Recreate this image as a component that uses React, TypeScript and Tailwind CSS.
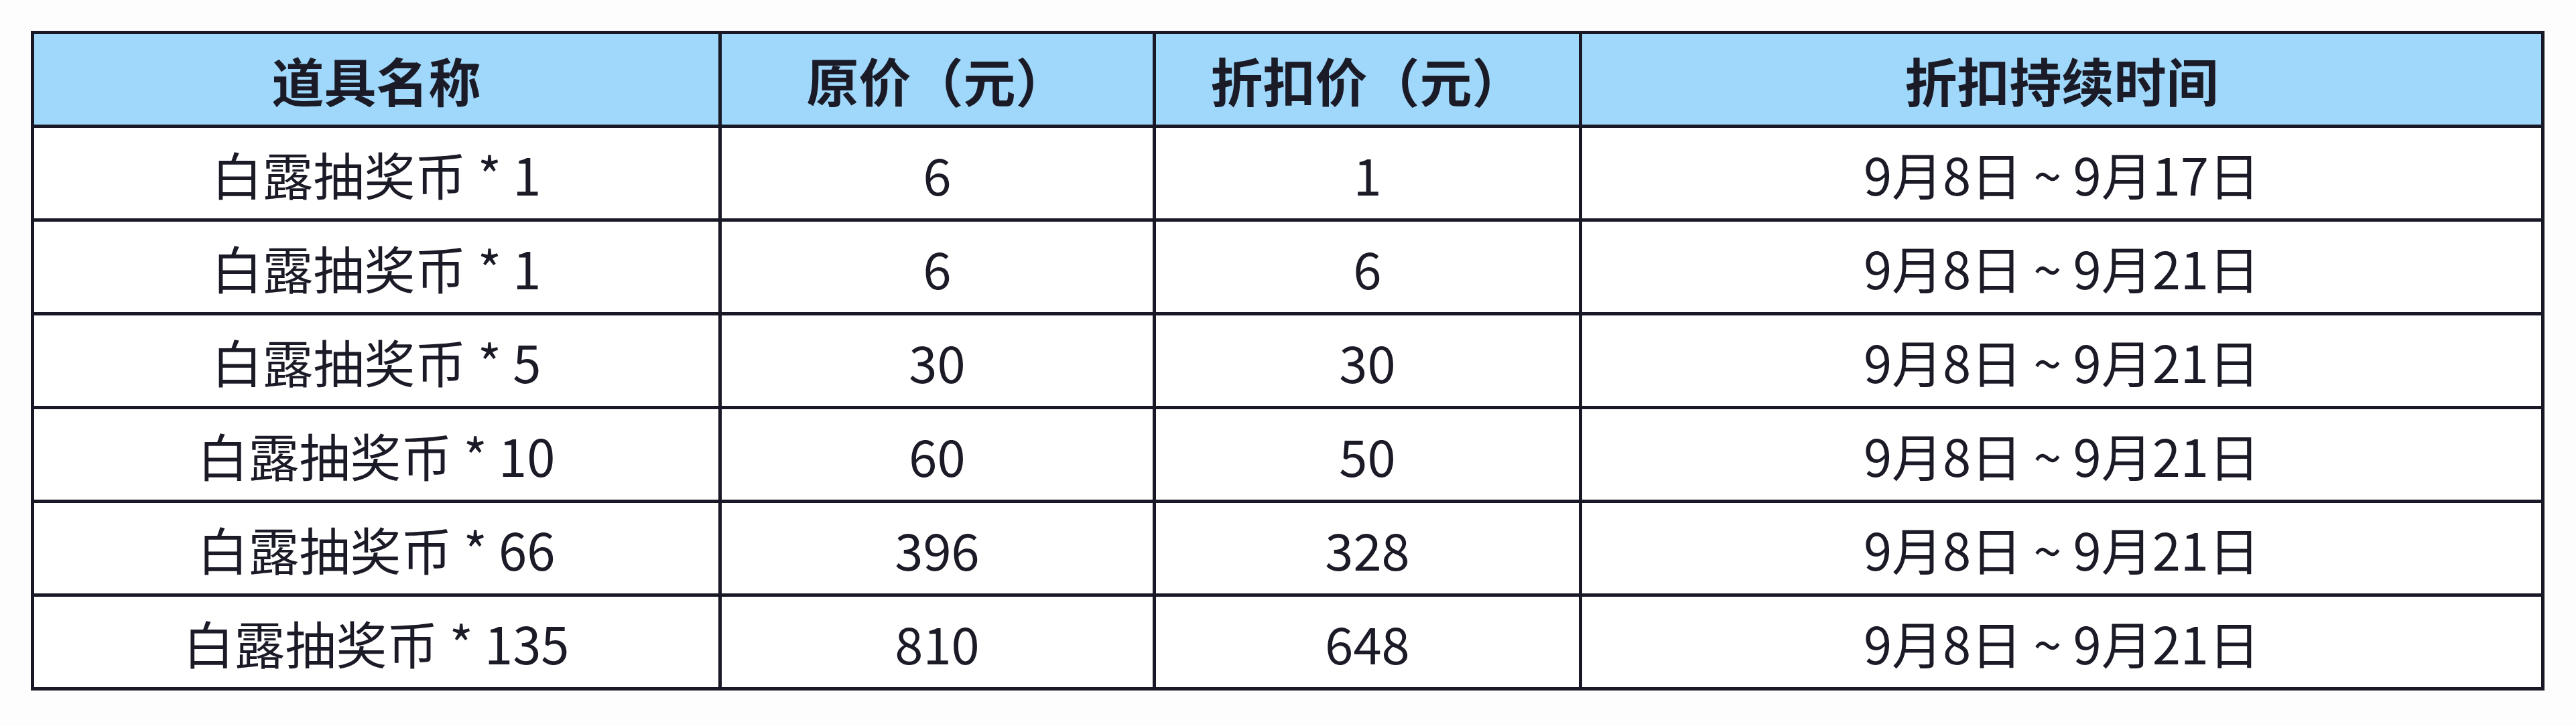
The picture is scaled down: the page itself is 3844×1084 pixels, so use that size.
const headers = ["道具名称", "原价（元）", "折扣价（元）", "折扣持续时间"];

const rows = [
  ["白露抽奖币 * 1", "6", "1", "9月8日 ~ 9月17日"],
  ["白露抽奖币 * 1", "6", "6", "9月8日 ~ 9月21日"],
  ["白露抽奖币 * 5", "30", "30", "9月8日 ~ 9月21日"],
  ["白露抽奖币 * 10", "60", "50", "9月8日 ~ 9月21日"],
  ["白露抽奖币 * 66", "396", "328", "9月8日 ~ 9月21日"],
  ["白露抽奖币 * 135", "810", "648", "9月8日 ~ 9月21日"],
];

const App = () => {
  return (
    <div
      className="min-h-[1084px] w-[3844px] bg-[#fdfdfd] pt-[46px] pl-[46px] text-[#1b1b27]"
      style={{ fontFamily: '"Noto Sans CJK SC", "Noto Sans", sans-serif' }}
    >
      <table className="w-[3751px] table-fixed border-collapse">
        <colgroup>
          <col className="w-[1026px]" />
          <col className="w-[648px]" />
          <col className="w-[636px]" />
          <col />
        </colgroup>
        <thead>
          <tr className="h-[140px] bg-[#9fd8fb]">
            {headers.map((h) => (
              <th
                key={h}
                className="border-[5px] border-[#181826] p-0 text-center text-[78px] font-bold leading-none"
              >
                {h}
              </th>
            ))}
          </tr>
        </thead>
        <tbody>
          {rows.map((row, i) => (
            <tr key={i} className="h-[140px] bg-white">
              {row.map((cell, j) => (
                <td
                  key={j}
                  className="border-[5px] border-[#181826] p-0 text-center text-[76px] font-normal leading-none"
                >
                  {cell}
                </td>
              ))}
            </tr>
          ))}
        </tbody>
      </table>
    </div>
  );
};

export default App;
